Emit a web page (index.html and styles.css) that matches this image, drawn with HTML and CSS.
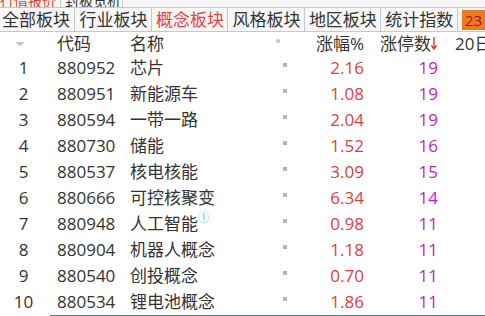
FILE: index.html
```html
<!DOCTYPE html>
<html lang="zh">
<head>
<meta charset="utf-8">
<link rel="stylesheet" href="styles.css">
</head>
<body>
<div class="topstrip">
  <div class="toptab red">行情报价</div>
  <div class="toptab">封板览析</div>
</div>
<div class="tabs">
  <div class="tab">全部板块</div>
  <div class="tab">行业板块</div>
  <div class="tab active">概念板块</div>
  <div class="tab">风格板块</div>
  <div class="tab">地区板块</div>
  <div class="tab">统计指数</div>
  <div class="badge">23</div>
</div>
<div class="grid">
  <div class="row head">
    <div class="c1"><span class="tri"></span></div>
    <div class="c2">代码</div>
    <div class="c3">名称</div>
    <div class="c4"><span class="dot"></span></div>
    <div class="c5">涨幅%</div>
    <div class="c6">涨停数<svg class="arrow" width="6" height="13" viewBox="0 0 6 13"><path d="M3 0V12M0.5 8.5L3 12L5.5 8.5" fill="none" stroke="#e0282a" stroke-width="1.3"/></svg></div>
    <div class="c7">20日</div>
  </div>
  <div class="row"><div class="c1">1</div><div class="c2">880952</div><div class="c3">芯片</div><div class="c4"><span class="sq"></span></div><div class="c5 up">2.16</div><div class="c6 cnt">19</div><div class="c7"></div></div>
  <div class="row"><div class="c1">2</div><div class="c2">880951</div><div class="c3">新能源车</div><div class="c4"><span class="sq"></span></div><div class="c5 up">1.08</div><div class="c6 cnt">19</div><div class="c7"></div></div>
  <div class="row"><div class="c1">3</div><div class="c2">880594</div><div class="c3">一带一路</div><div class="c4"><span class="sq"></span></div><div class="c5 up">2.04</div><div class="c6 cnt">19</div><div class="c7"></div></div>
  <div class="row"><div class="c1">4</div><div class="c2">880730</div><div class="c3">储能</div><div class="c4"><span class="sq"></span></div><div class="c5 up">1.52</div><div class="c6 cnt">16</div><div class="c7"></div></div>
  <div class="row"><div class="c1">5</div><div class="c2">880537</div><div class="c3">核电核能</div><div class="c4"><span class="sq"></span></div><div class="c5 up">3.09</div><div class="c6 cnt">15</div><div class="c7"></div></div>
  <div class="row"><div class="c1">6</div><div class="c2">880666</div><div class="c3">可控核聚变</div><div class="c4"><span class="sq"></span></div><div class="c5 up">6.34</div><div class="c6 cnt">14</div><div class="c7"></div></div>
  <div class="row"><div class="c1">7</div><div class="c2">880948</div><div class="c3">人工智能<sup class="mark">①</sup></div><div class="c4"><span class="sq"></span></div><div class="c5 up">0.98</div><div class="c6 cnt">11</div><div class="c7"></div></div>
  <div class="row"><div class="c1">8</div><div class="c2">880904</div><div class="c3">机器人概念</div><div class="c4"><span class="sq"></span></div><div class="c5 up">1.18</div><div class="c6 cnt">11</div><div class="c7"></div></div>
  <div class="row"><div class="c1">9</div><div class="c2">880540</div><div class="c3">创投概念</div><div class="c4"><span class="sq"></span></div><div class="c5 up">0.70</div><div class="c6 cnt">11</div><div class="c7"></div></div>
  <div class="row"><div class="c1">10</div><div class="c2">880534</div><div class="c3">锂电池概念</div><div class="c4"><span class="sq"></span></div><div class="c5 up">1.86</div><div class="c6 cnt">11</div><div class="c7"></div></div>
</div>
<div class="bottomline"></div>
</body>
</html>
```
FILE: styles.css
```css
html, body {
  margin: 0;
  padding: 0;
  background: #ffffff;
  width: 485px;
  height: 316px;
  overflow: hidden;
}
body {
  font-family: "Open Sans", "Noto Sans CJK SC", sans-serif;
  font-size: 17px;
  color: #333333;
}
.topstrip {
  display: flex;
  height: 7px;
  overflow: hidden;
  border-bottom: 1px solid #c8c8c8;
  background: #f7f7f7;
}
.toptab {
  width: 61px;
  box-sizing: border-box;
  border-right: 1px solid #c8c8c8;
  font-size: 14px;
  line-height: 20px;
  margin-top: -9px;
  padding-left: 0;
  white-space: nowrap;
  overflow: hidden;
  color: #333;
  margin-right: 1px;
}
.toptab + .toptab {
  padding-left: 3px;
  width: 61px;
}
.toptab.red { color: #e23c3c; }
.tabs {
  display: flex;
  height: 23px;
  border-bottom: 1px solid #c8c8c8;
  background: #f7f7f7;
  overflow: hidden;
}
.tab {
  width: 76px;
  padding-left: 3px;
  box-sizing: border-box;
  border-right: 1px solid #c8c8c8;
  line-height: 23px;
  white-space: nowrap;
  margin-right: 1px;
  color: #333;
}
.tab:first-child { padding-left: 2px; width: 76px; }
.tab.active { color: #e8423d; }
.badge {
  margin-left: 3px;
  margin-top: 2px;
  height: 20px;
  padding: 0 3px;
  background: #ef7a22;
  color: #a01818;
  font-size: 15px;
  line-height: 20px;
}
.grid {
  display: flex;
  flex-direction: column;
}
.row {
  display: grid;
  grid-template-columns: 47px 82px 146px 25px 64px 74px 1fr;
  height: 26px;
  line-height: 26px;
  align-items: center;
  white-space: nowrap;
}
.row.head {
  height: 23px;
  line-height: 23px;
}
.c1 { text-align: center; }
.c2 { padding-left: 10px; }
.c3 { padding-left: 1px; }
.c4 { display: flex; align-items: center; }
.c5 { text-align: right; }
.c6 { text-align: right; }
.c7 { padding-left: 17px; }
.head .c6 { padding-right: 1px; }
.up { color: #e0403c; }
.cnt { color: #c21fc2; }
.tri {
  display: inline-block;
  width: 0;
  height: 0;
  border-left: 5px solid transparent;
  border-right: 5px solid transparent;
  border-top: 4px solid #c4c4c4;
  vertical-align: middle;
  margin-left: -8px;
  margin-top: -3px;
}
.dot {
  display: inline-block;
  width: 4px;
  height: 4px;
  border-radius: 50%;
  background: #c2c2c2;
  margin-left: 1px;
  margin-top: -5px;
}
.sq {
  display: inline-block;
  width: 4px;
  height: 4px;
  background: #b4b4b4;
  margin-left: 8px;
  margin-top: -6px;
}
.arrow {
  vertical-align: middle;
  margin-top: -3px;
}
.mark {
  font-size: 11px;
  color: #3fc7dd;
  vertical-align: top;
  line-height: 11px;
  position: relative;
  top: 1px;
}
.bottomline {
  margin-left: 50px;
  height: 2px;
  background: #2c8fa0;
}
```
